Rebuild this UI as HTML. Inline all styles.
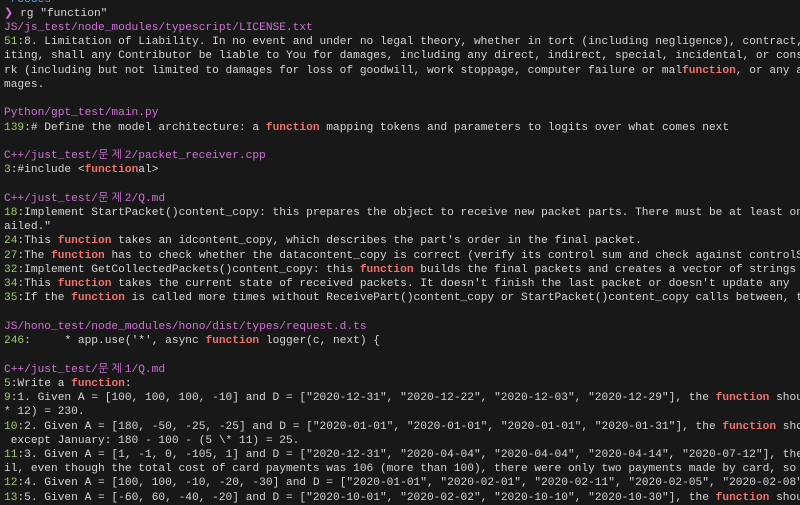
<!DOCTYPE html>
<html><head><meta charset="utf-8"><style>
html,body{margin:0;padding:0;background:#181818;width:800px;height:503px;overflow:hidden}
pre{margin:0;position:absolute;left:4px;top:-7.5px;width:796px;overflow:hidden;font-family:"Liberation Mono","NanumGothic",monospace;font-size:11.2px;line-height:14.24px;color:#d4d4d4;white-space:pre}
.p{color:#cf6fd6}.g{color:#9ccb6a}.r{color:#f0706a;font-weight:bold}.b{color:#5aa0e0}
.k{display:inline-block;width:13.4px;text-align:left}
</style></head><body><pre><span class="b">~/codes</span>
<span class="p">❯</span> rg "function"
<span class="p">JS/js_test/node_modules/typescript/LICENSE.txt</span>
<span class="g">51</span>:8. Limitation of Liability. In no event and under no legal theory, whether in tort (including negligence), contract, or otherwise
iting, shall any Contributor be liable to You for damages, including any direct, indirect, special, incidental, or consequential
rk (including but not limited to damages for loss of goodwill, work stoppage, computer failure or mal<span class="r">function</span>, or any and all other
mages.

<span class="p">Python/gpt_test/main.py</span>
<span class="g">139</span>:# Define the model architecture: a <span class="r">function</span> mapping tokens and parameters to logits over what comes next

<span class="p">C++/just_test/<span class="k">문</span><span class="k">제</span>2/packet_receiver.cpp</span>
<span class="g">3</span>:#include &lt;<span class="r">function</span>al&gt;

<span class="p">C++/just_test/<span class="k">문</span><span class="k">제</span>2/Q.md</span>
<span class="g">18</span>:Implement StartPacket()content_copy: this prepares the object to receive new packet parts. There must be at least one
ailed."
<span class="g">24</span>:This <span class="r">function</span> takes an idcontent_copy, which describes the part's order in the final packet.
<span class="g">27</span>:The <span class="r">function</span> has to check whether the datacontent_copy is correct (verify its control sum and check against controlSum
<span class="g">32</span>:Implement GetCollectedPackets()content_copy: this <span class="r">function</span> builds the final packets and creates a vector of strings
<span class="g">34</span>:This <span class="r">function</span> takes the current state of received packets. It doesn't finish the last packet or doesn't update any
<span class="g">35</span>:If the <span class="r">function</span> is called more times without ReceivePart()content_copy or StartPacket()content_copy calls between, the

<span class="p">JS/hono_test/node_modules/hono/dist/types/request.d.ts</span>
<span class="g">246</span>:     * app.use('*', async <span class="r">function</span> logger(c, next) {

<span class="p">C++/just_test/<span class="k">문</span><span class="k">제</span>1/Q.md</span>
<span class="g">5</span>:Write a <span class="r">function</span>:
<span class="g">9</span>:1. Given A = [100, 100, 100, -10] and D = ["2020-12-31", "2020-12-22", "2020-12-03", "2020-12-29"], the <span class="r">function</span> should
* 12) = 230.
<span class="g">10</span>:2. Given A = [180, -50, -25, -25] and D = ["2020-01-01", "2020-01-01", "2020-01-01", "2020-01-31"], the <span class="r">function</span> should
 except January: 180 - 100 - (5 \* 11) = 25.
<span class="g">11</span>:3. Given A = [1, -1, 0, -105, 1] and D = ["2020-12-31", "2020-04-04", "2020-04-04", "2020-04-14", "2020-07-12"], the
il, even though the total cost of card payments was 106 (more than 100), there were only two payments made by card, so
<span class="g">12</span>:4. Given A = [100, 100, -10, -20, -30] and D = ["2020-01-01", "2020-02-01", "2020-02-11", "2020-02-05", "2020-02-08"]
<span class="g">13</span>:5. Given A = [-60, 60, -40, -20] and D = ["2020-10-01", "2020-02-02", "2020-10-10", "2020-10-30"], the <span class="r">function</span> should
</pre></body></html>
